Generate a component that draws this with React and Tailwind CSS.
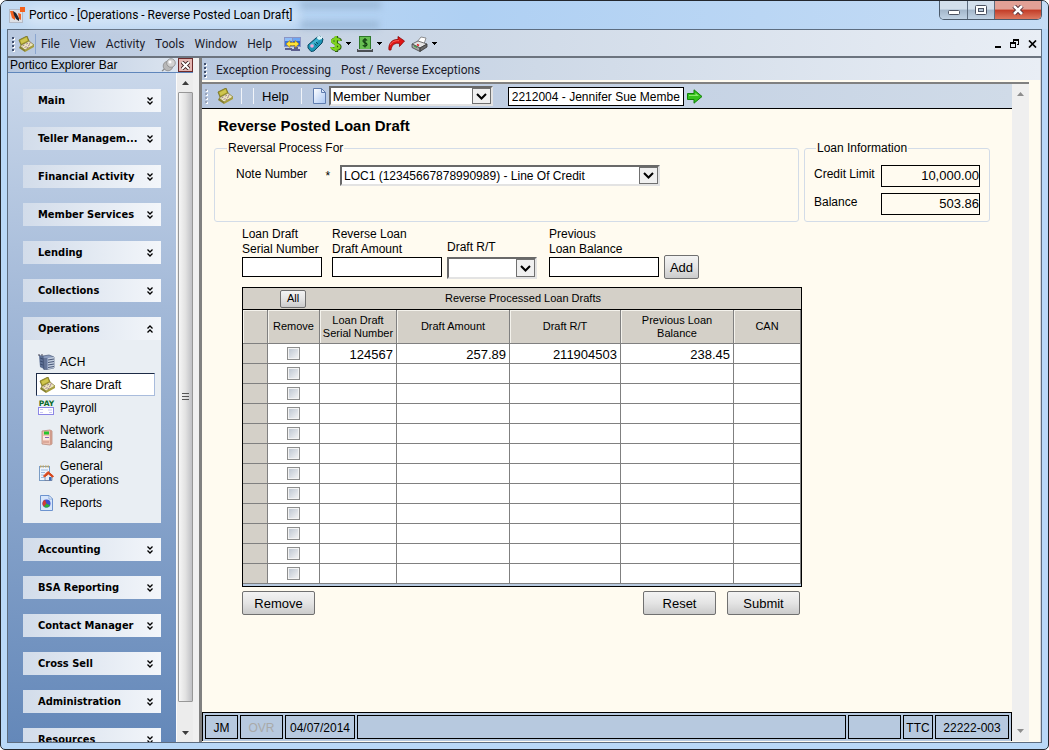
import React from "react";

const sans = "font-['Liberation_Sans',Arial,sans-serif]";
const ui = "font-['Roboto','Noto_Sans',sans-serif]";
const heading = "font-['DejaVu_Sans_Condensed','DejaVu_Sans',sans-serif]";

/* ---------- icons ---------- */

function LogoIcon() {
  return (
    <svg width="16" height="16" viewBox="0 0 16 16" aria-hidden="true">
      <rect x=".5" y="2.500" width="13" height="13" fill="#dde0e6" stroke="#b4bac6" />
      <path d="M1 4h3l2 3v6l-3-2z" fill="#f2611f" />
      <path d="M4 4l3 2 3 5v3l-3-2-2-4z" fill="#1c2531" />
      <path d="M9 6l3 1v6l-2-1z" fill="#f2611f" />
      <rect x="11" y="0" width="5" height="5" fill="#f4601a" />
    </svg>
  );
}

function DraftIcon({ size = 16 }) {
  return (
    <svg width={size} height={size} viewBox="0 0 16 16" aria-hidden="true">
      <path d="M1 4l8-4 2 5-8 4z" fill="#b5a92f" stroke="#6f6a20" strokeWidth=".8" />
      <path d="M2.500 4.500L8.500 1.500l1 3-6 3z" fill="#cfc650" />
      <path d="M2 10l9-5 5 4-9 5z" fill="#ece6bb" stroke="#8d8538" strokeWidth=".8" />
      <path d="M4.500 10l2-1M6.500 11.500l2-1M8 8.200l2-1M10 9.600l2-1M11 7.500l2-1M8.500 12l2-1" stroke="#a5829a" strokeWidth="1" />
      <path d="M2 10l5 4v2L1 12z" fill="#857f30" />
      <path d="M7 14l9-5v2l-9 5z" fill="#a79e3c" />
    </svg>
  );
}

function MonitorsIcon() {
  return (
    <svg width="17" height="16" viewBox="0 0 17 16" aria-hidden="true">
      <rect x=".5" y="1.500" width="8" height="9" fill="#3c74da" stroke="#8a94c4" />
      <path d="M1 2h7v3H1z" fill="#8fbdf7" />
      <rect x="8.500" y="1.500" width="8" height="9" fill="#2f62cf" stroke="#8a94c4" />
      <path d="M9 2h7v3H9z" fill="#6ea5f2" />
      <path d="M1 12h7v2H1zM7 13h9v2H7zM10 11h4v2h-4z" fill="#5b5f8e" />
      <path d="M2 8l4-3.500v2h5v-2L15 8l-4 3.500v-2H6v2z" fill="#ffe438" stroke="#a8820c" strokeWidth=".6" />
    </svg>
  );
}

function PhoneIcon() {
  return (
    <svg width="17" height="17" viewBox="0 0 17 17" aria-hidden="true">
      <path d="M1 10l8-7 4-2 3 3-1 4-8 8-3 .5L1 13z" fill="#1f95b5" stroke="#0c4a63" strokeWidth="1" />
      <path d="M2.500 10l7-6 2.500 1-7 7z" fill="#43b4d0" />
      <path d="M9.500 3L12 .5l1.500 1L15 1v3l-3 1z" fill="#d9f4fa" />
      <circle cx="5" cy="11" r="1.800" fill="#f2a6d4" />
      <path d="M9 7l2 2M7.500 8.500l2 2" stroke="#0c4a63" />
    </svg>
  );
}

function DollarIcon() {
  return (
    <svg width="12" height="16" viewBox="0 0 12 16" aria-hidden="true">
      <path d="M10.500 5C10 2.500 2.500 2 2.500 5S10 7.500 10 10.800 2 14 2 11M6.500 0v16" fill="none" stroke="#2d5d10" strokeWidth="3.200" />
      <path d="M9.800 5C9.500 2.500 2 2 2 5s7.500 2.500 7.500 5.500S1.500 13.500 1.500 11M5.800 0v15" fill="none" stroke="#7fd41f" strokeWidth="2.200" />
    </svg>
  );
}

function CashIcon() {
  return (
    <svg width="16" height="16" viewBox="0 0 16 16" aria-hidden="true">
      <rect x="2.500" y=".5" width="11" height="13" fill="#67bf52" stroke="#2f7a2b" />
      <path d="M10 4.500C9.500 3.300 6 3.200 6 5s4 1.500 4 3.500-3.800 2-4 .5M8 2v9.500" fill="none" stroke="#123f12" strokeWidth="1.200" />
      <path d="M0 13h16v3H0z" fill="#4b4f55" />
      <path d="M1 13h14v1H1z" fill="#b7bcc4" />
    </svg>
  );
}

function RedArrowIcon() {
  return (
    <svg width="17" height="15" viewBox="0 0 17 15" aria-hidden="true">
      <path d="M1 14C0 8 4 3 10 3.500V.5L16.500 5l-5 5.500V7.500C7 6.500 3.500 9 3 14z" fill="#e01515" stroke="#8c0808" strokeWidth=".8" />
      <path d="M2 9c2-3.500 5-4.500 9-4.300" fill="none" stroke="#ff7a70" strokeWidth=".8" />
    </svg>
  );
}

function PrinterIcon() {
  return (
    <svg width="17" height="16" viewBox="0 0 17 16" aria-hidden="true">
      <path d="M6 6l4-5 5 1-2 6z" fill="#fff" stroke="#777" strokeWidth=".8" />
      <path d="M1 8l6-3 9 3-7 4z" fill="#e4e4e4" stroke="#555" strokeWidth=".8" />
      <path d="M1 8l8 4v3.500l-8-4z" fill="#a4a4a4" stroke="#444" strokeWidth=".8" />
      <path d="M9 12l7-4v3l-7 4.500z" fill="#6a6a6a" stroke="#333" strokeWidth=".8" />
      <path d="M6 8.500l2 1" stroke="#d22" strokeWidth="1.500" />
      <path d="M3 10l3 1.500" stroke="#3a3" strokeWidth="1" />
    </svg>
  );
}

function PageIcon() {
  return (
    <svg width="13" height="16" viewBox="0 0 13 16" aria-hidden="true">
      <defs>
        <linearGradient id="page" x1="0" y1="0" x2="1" y2="1">
          <stop offset="0" stopColor="#fff" />
          <stop offset="1" stopColor="#a9c6f2" />
        </linearGradient>
      </defs>
      <path d="M.5.5h8l4 4v11H.5z" fill="url(#page)" stroke="#5f7cae" />
      <path d="M8.500.5v4h4z" fill="#dfeafb" stroke="#5f7cae" />
    </svg>
  );
}

function GreenArrowIcon() {
  return (
    <svg width="16" height="15" viewBox="0 0 16 15" aria-hidden="true">
      <path d="M.5 4.500H7V.8l8 6.700-8 6.700v-3.700H.5z" fill="#35c21c" stroke="#128008" />
      <path d="M2 6h6.500V4L12 7H2z" fill="#8be86c" />
    </svg>
  );
}

function Caret() {
  return (
    <svg width="5" height="3" viewBox="0 0 5 3" shapeRendering="crispEdges" aria-hidden="true">
      <path d="M0 0h5v1H4v1H3v1H2V2H1V1H0z" fill="#000" />
    </svg>
  );
}

function DoubleChevron({ up }) {
  return (
    <svg width="6" height="8" viewBox="0 0 6 8" className={up ? "rotate-180" : ""} aria-hidden="true">
      <path d="M.5 .5L3 3 5.500.5M.5 4.500L3 7l2.500-2.500" fill="none" stroke="#000" strokeWidth="1.300" />
    </svg>
  );
}

function PinIcon() {
  return (
    <svg width="15" height="14" viewBox="0 0 15 14" aria-hidden="true">
      <path d="M6 9l-5 4" stroke="#8a8a8a" strokeWidth="1.200" />
      <circle cx="7" cy="8" r="4.800" fill="#b8b8b8" stroke="#8b8b8b" strokeWidth=".8" />
      <circle cx="10" cy="5" r="4.300" fill="#d2d2d2" stroke="#8b8b8b" strokeWidth=".8" />
      <circle cx="9" cy="4" r="1.500" fill="#fff" />
    </svg>
  );
}

function AchIcon() {
  return (
    <svg width="17" height="16" viewBox="0 0 17 16" aria-hidden="true">
      <path d="M1 1l5 1v13l-4-2z" fill="#5c6f94" />
      <path d="M5 2l6-1 5 2v11l-5 1-5 1z" fill="#8a9bbd" stroke="#4b5a7a" strokeWidth=".7" />
      <path d="M10 4l6-1v11l-6 1z" fill="#c3cede" />
      <path d="M10 6l6-1M10 8.500l6-1M10 11l6-1M10 13.500l6-1M2 4l3 1M2 7l3 1M2 10l3 1M6 4v11M8 4v11" stroke="#39486b" strokeWidth=".9" />
      <path d="M0 1h6" stroke="#445" strokeDasharray="2 1" />
    </svg>
  );
}

function PayIcon() {
  return (
    <svg width="17" height="16" viewBox="0 0 17 16" aria-hidden="true">
      <text x="8.500" y="6" textAnchor="middle" fontSize="7.500" fontWeight="bold" fontFamily="DejaVu Sans, sans-serif" fill="#0c6a2c">PAY</text>
      <rect x=".5" y="7.500" width="15" height="7" fill="#fff" stroke="#8c86e6" />
      <path d="M2 9.500h3M10 10h4M2 12.500h3M11 12.500h3" stroke="#c9c6f6" />
    </svg>
  );
}

function NetworkIcon() {
  return (
    <svg width="12" height="17" viewBox="0 0 12 17" aria-hidden="true">
      <path d="M1 2l8-1 2 1v13l-2 1-8-1z" fill="#efc3b4" stroke="#b98a7c" strokeWidth=".8" />
      <path d="M9 1l2 1v13l-2 1z" fill="#cf9b8b" />
      <rect x="3" y="2.500" width="5" height="3" fill="#28c42c" />
      <rect x="2" y="7" width="6.500" height="4" fill="#fbe9e2" />
      <path d="M4 8.500h4" stroke="#8a62b5" />
      <path d="M2 13h6" stroke="#c98f80" />
    </svg>
  );
}

function GeneralIcon() {
  return (
    <svg width="15" height="17" viewBox="0 0 15 17" aria-hidden="true">
      <rect x=".5" y="1.500" width="10" height="14" fill="#eef5ff" stroke="#7a9cc4" />
      <path d="M1 1.500h9" stroke="#c0a868" strokeWidth="2" strokeDasharray="1.500 1" />
      <path d="M2 5h7M2 7.500h4M2 10h3M2 12.500h3" stroke="#9db9dd" />
      <path d="M6 11v4.500h7V11l-3.500-3z" fill="#e9edf5" stroke="#5e6f91" strokeWidth=".7" />
      <path d="M4.500 11L9 6.500l5.500 4.700-1 1L9.500 9l-4 3z" fill="#d9481c" stroke="#d9481c" />
      <rect x="10" y="12" width="2.500" height="3.500" fill="#3d6bb5" />
    </svg>
  );
}

function ReportsIcon() {
  return (
    <svg width="13" height="16" viewBox="0 0 13 16" aria-hidden="true">
      <path d="M.5.5h8.500l3.500 3.500v11.500H.5z" fill="#d7e6fb" stroke="#6c93cf" />
      <path d="M9 .5V4h3.500z" fill="#fff" stroke="#6c93cf" strokeWidth=".7" />
      <circle cx="6.500" cy="8.500" r="4" fill="#3b50cf" />
      <path d="M6.500 8.500l-1.500-3.700A4 4 0 0 0 4 11.700z" fill="#d13a35" />
      <path d="M6.500 8.500L4 11.700A4 4 0 0 0 10 10.400z" fill="#2fae3a" />
    </svg>
  );
}

function ScrollTriangle({ down, muted }) {
  return (
    <svg width="7" height="4" viewBox="0 0 7 4" className={down ? "rotate-180" : ""} aria-hidden="true">
      <path d="M0 4l3.500-4L7 4z" fill={muted ? "#8d8d8d" : "#3c3c3c"} />
    </svg>
  );
}

function Grip({ light }) {
  return (
    <svg width="3" height="16" viewBox="0 0 3 16" shapeRendering="crispEdges" aria-hidden="true">
      {[1, 5, 9, 13].map((y) => (
        <g key={y}>
          <rect x="1" y={y + 1} width="2" height="2" fill="#fff" />
          <rect x="0" y={y} width="2" height="2" fill={light ? "#9aa3b6" : "#41506f"} />
        </g>
      ))}
    </svg>
  );
}

/* ---------- shared controls ---------- */

function GrayButton({ children, className = "" }) {
  return (
    <button
      type="button"
      className={`flex items-center justify-center rounded-[2px] border border-[#707070] bg-linear-to-b from-[#f3f3f3] via-[#e4e4e4] to-[#cbcbcb] ${className}`}
    >
      {children}
    </button>
  );
}

function Combo({ id, label, options, className = "" }) {
  return (
    <div className={`relative ${className}`}>
      <select
        id={id}
        aria-label={label}
        className="h-full w-full appearance-none border-2 border-t-[#696969] border-r-[#e3e3e3] border-b-[#e3e3e3] border-l-[#696969] bg-white pt-px pr-5 pl-[2px] leading-4 text-black outline-none"
      >
        {options.map((o) => (
          <option key={o}>{o}</option>
        ))}
      </select>
      <span className="pointer-events-none absolute inset-y-[2px] right-[2px] flex w-[19px] items-center justify-center border border-[#707070] bg-[#f0f0f0]">
        <svg width="11" height="7" viewBox="0 0 11 7" aria-hidden="true">
          <path d="M1 1l4.500 4.500L10 1" fill="none" stroke="#000" strokeWidth="2" />
        </svg>
      </span>
    </div>
  );
}

/* ---------- window frame ---------- */

function TitleBar() {
  return (
    <header className="relative flex h-7 shrink-0 items-center bg-linear-to-r from-[#c3daf2] via-[#afd0f3] via-45% to-[#c5dcf5] pl-2">
      <span className="absolute top-0 left-[300px] h-2 w-[80px] bg-[#8fabc9]/60 blur-[3px]" />
      <span className="absolute top-5 left-[300px] h-2 w-[78px] bg-[#8fabc9]/60 blur-[3px]" />
      <span className="absolute top-[5px] left-6 h-5 w-[275px] rounded-full bg-white/30 blur-[5px]" />
      <span className="relative">
        <LogoIcon />
      </span>
      <h1 className={`relative ml-1 text-[12px] leading-4 text-black ${ui}`}>
        Portico - [Operations - Reverse Posted Loan Draft]
      </h1>
      <div className="absolute top-0 right-[6px] flex h-[19px] overflow-hidden rounded-b-[5px] border border-t-0 border-[#4b5a6b]">
        <button type="button" aria-label="Minimize" className="flex w-7 items-center justify-center border-r border-[#5d6c7e] bg-linear-to-b from-[#d3dfec] from-45% via-[#a3b6ca] via-50% to-[#c0d2e4]">
          <svg width="12" height="5" viewBox="0 0 12 5" className="mt-1" aria-hidden="true">
            <rect x=".5" y=".5" width="11" height="4" rx="1" fill="#fff" stroke="#4b5262" />
          </svg>
        </button>
        <button type="button" aria-label="Maximize" className="flex w-[27px] items-center justify-center border-r border-[#5d6c7e] bg-linear-to-b from-[#d3dfec] from-45% via-[#a3b6ca] via-50% to-[#c0d2e4]">
          <svg width="12" height="10" viewBox="0 0 12 10" aria-hidden="true">
            <rect x=".5" y=".5" width="11" height="9" rx="1" fill="#fff" stroke="#4b5262" />
            <rect x="3.500" y="3.500" width="5" height="3" fill="#b5c5d6" stroke="#4b5262" />
          </svg>
        </button>
        <button type="button" aria-label="Close" className="flex w-[46px] items-center justify-center bg-linear-to-b from-[#e2a196] from-45% via-[#c23b26] via-50% to-[#dd7860]">
          <svg width="12" height="10" viewBox="0 0 12 10" aria-hidden="true">
            <path d="M2 1l8 8M10 1L2 9" stroke="#57323a" strokeWidth="4.500" />
            <path d="M2 1l8 8M10 1L2 9" stroke="#fff" strokeWidth="2.600" />
          </svg>
        </button>
      </div>
    </header>
  );
}

function IconButton({ label, caret, children }) {
  return (
    <button type="button" aria-label={label} className="flex items-center gap-1">
      {children}
      {caret && <Caret />}
    </button>
  );
}

function MenuBar() {
  return (
    <div className="flex h-7 shrink-0 items-center border-b-2 border-[#6c747f] bg-linear-to-r from-[#b9c9e0] via-[#ced9e7] via-45% to-[#e9eef5] pt-px pl-1">
      <Grip />
      <span className="ml-[3px] flex h-5 items-center border-r border-[#8ba6d0] pr-px">
        <DraftIcon />
      </span>
      <nav className={`ml-[5px] flex items-center gap-[10px] text-[12px] leading-4 text-[#1c1c2b] ${ui}`}>
        {["File", "View", "Activity", "Tools", "Window", "Help"].map((m) => (
          <button type="button" key={m}>
            {m}
          </button>
        ))}
      </nav>
      <div className="ml-3 flex items-center gap-[6px]">
        <IconButton label="Connections"><MonitorsIcon /></IconButton>
        <IconButton label="Phone"><PhoneIcon /></IconButton>
        <IconButton label="Teller" caret><DollarIcon /></IconButton>
        <IconButton label="Cash" caret><CashIcon /></IconButton>
        <IconButton label="Go"><RedArrowIcon /></IconButton>
        <IconButton label="Print" caret><PrinterIcon /></IconButton>
      </div>
      <div className="mr-1 ml-auto flex items-center gap-[9px]">
        <button type="button" aria-label="Minimize document">
          <svg width="7" height="9" viewBox="0 0 7 9" aria-hidden="true"><path d="M1 7h6v2H1z" /></svg>
        </button>
        <button type="button" aria-label="Restore document">
          <svg width="9" height="9" viewBox="0 0 9 9" shapeRendering="crispEdges" aria-hidden="true">
            <path d="M3 0h6v6H7V5h1V2H4v1H3zM0 3h6v6H0zM1 5v3h4V5z" fillRule="evenodd" />
          </svg>
        </button>
        <button type="button" aria-label="Close document">
          <svg width="9" height="8" viewBox="0 0 9 8" aria-hidden="true"><path d="M1 .5l7 7M8 .5l-7 7" stroke="#000" strokeWidth="1.700" /></svg>
        </button>
      </div>
    </div>
  );
}

/* ---------- sidebar ---------- */

const operations = [
  { label: "ACH", icon: AchIcon },
  { label: "Share Draft", icon: DraftIcon, active: true },
  { label: "Payroll", icon: PayIcon },
  { label: "Network Balancing", icon: NetworkIcon, tall: true },
  { label: "General Operations", icon: GeneralIcon, tall: true },
  { label: "Reports", icon: ReportsIcon },
];

const groups = [
  "Main", "Teller Managem...", "Financial Activity", "Member Services", "Lending", "Collections",
  "Operations", "Accounting", "BSA Reporting", "Contact Manager", "Cross Sell", "Administration", "Resources",
];

function Group({ name }) {
  const open = name === "Operations";
  return (
    <section className="shrink-0">
      <button
        type="button"
        aria-expanded={open}
        className={`flex h-[23px] w-full items-center justify-between bg-linear-to-r from-[#d2dcea] to-[#f3f6fa] pr-2 pl-[15px] text-[11px] leading-4 font-bold text-black ${heading}`}
      >
        {name}
        <DoubleChevron up={open} />
      </button>
      {open && (
        <ul className="bg-[#e9eef3] pt-[10px] pr-[6px] pb-[9px] pl-[13px] text-[12px] leading-[14px]">
          {operations.map(({ label, icon: Icon, active, tall }) => (
            <li key={label} className={tall ? "h-9" : "h-[23px]"}>
              <a
                href="#"
                className={`flex h-full items-center gap-[5px] border pl-px ${
                  active ? "border-t-[#1c2a45] border-r-[#a9bcdc] border-b-[#a9bcdc] border-l-[#1c2a45] bg-white" : "border-transparent"
                }`}
              >
                <span className="flex w-[17px] shrink-0 justify-center">
                  <Icon />
                </span>
                <span className={tall ? "w-16" : ""}>{label}</span>
              </a>
            </li>
          ))}
        </ul>
      )}
    </section>
  );
}

function Sidebar() {
  return (
    <aside className={`flex w-[191px] shrink-0 flex-col bg-[#f0f0f0] text-black ${sans}`}>
      <div className="mr-[6px] flex h-[15px] shrink-0 items-center border-b border-[#5f86bb] bg-linear-to-r from-[#b5c6de] to-[#dfe7f1] pl-[2px] text-[12px] leading-[14px]">
        <h2>Portico Explorer Bar</h2>
        <button type="button" aria-label="Pin" className="ml-auto">
          <PinIcon />
        </button>
        <button type="button" aria-label="Close bar" className="ml-[2px] flex h-[14px] w-[15px] items-center justify-center border border-[#6d2b2b] bg-[#e4b6b2]">
          <svg width="9" height="9" viewBox="0 0 9 9" aria-hidden="true">
            <path d="M1 1l7 7M8 1L1 8" stroke="#3d2222" strokeWidth="3.800" />
            <path d="M1 1l7 7M8 1L1 8" stroke="#fff" strokeWidth="2" />
          </svg>
        </button>
      </div>
      <div className="flex min-h-0 flex-1">
        <div className="flex min-h-0 flex-1 flex-col gap-[15px] overflow-hidden bg-linear-to-b from-[#c9d7ea] via-[#a3b9d8] via-35% to-[#6488b9] px-[15px] pt-4">
          {groups.map((g) => (
            <Group key={g} name={g} />
          ))}
        </div>
        <div className="mr-[6px] flex w-[17px] shrink-0 flex-col items-center border-l border-[#fbfbfb] bg-[#ececec]">
          <div className="flex h-[19px] items-center"><ScrollTriangle /></div>
          <div className="flex w-[15px] flex-1 items-center justify-center rounded-[1px] border border-[#979797] bg-linear-to-r from-[#f6f6f6] via-[#e2e2e2] to-[#bfc0c4]">
            <svg width="7" height="8" viewBox="0 0 7 8" shapeRendering="crispEdges" aria-hidden="true">
              <path d="M0 0h7v1H0zM0 3h7v1H0zM0 6h7v1H0z" fill="#555" />
            </svg>
          </div>
          <div className="flex h-10 items-end pb-[7px]"><ScrollTriangle down /></div>
        </div>
      </div>
    </aside>
  );
}

/* ---------- main form ---------- */

function Toolbar() {
  return (
    <div className="flex h-[25px] shrink-0 items-center border-b border-black bg-linear-to-r from-[#b7c7df] to-[#d0dbe8] pl-[3px] text-[13px]">
      <Grip light />
      <span className="ml-[9px]"><DraftIcon /></span>
      <span className="ml-2 h-4 w-px bg-white/80" />
      <span className="ml-[11px] h-4 w-px bg-white/80" />
      <button type="button" className="ml-2 pt-px">Help</button>
      <span className="ml-3 h-4 w-px bg-white/80" />
      <button type="button" aria-label="New" className="ml-[11px]"><PageIcon /></button>
      <Combo id="search-by" label="Search by" options={["Member Number"]} className="ml-[3px] h-5 w-[164px]" />
      <input
        type="text"
        aria-label="Member"
        defaultValue="2212004 - Jennifer Sue Member"
        className="ml-[15px] h-[19px] w-[176px] border border-black bg-white px-[3px] pt-px text-[12px] outline-none"
      />
      <button type="button" aria-label="Search" className="ml-[3px]"><GreenArrowIcon /></button>
    </div>
  );
}

function GroupBox({ legend, legendClass = "", className = "", children }) {
  return (
    <fieldset className={`h-[82px] min-w-0 rounded-[3px] border border-[#d3dce8] ${className}`}>
      <legend className={`px-px leading-4 ${legendClass}`}>{legend}</legend>
      {children}
    </fieldset>
  );
}

function LabeledInput({ id, label, className }) {
  return (
    <div className={`flex flex-col ${className}`}>
      <label htmlFor={id} className="leading-[15px] whitespace-pre">{label}</label>
      <input id={id} type="text" className="h-5 w-full border border-black bg-white px-1 outline-none" />
    </div>
  );
}

function AmountField({ id, label, value }) {
  return (
    <div className="flex justify-between">
      <label htmlFor={id} className="leading-[18px]">{label}</label>
      <input
        id={id}
        readOnly
        defaultValue={value}
        className="h-[22px] w-[99px] border border-black bg-transparent pb-[2px] text-right text-[13px] outline-none"
      />
    </div>
  );
}

const rows = [["124567", "257.89", "211904503", "238.45", ""], ...Array.from({ length: 11 }, () => ["", "", "", "", ""])];
const th = "border-r border-b border-[#808080] px-px font-normal shadow-[inset_1px_1px_0_#f4f2ec]";

function DraftTable() {
  return (
    <div className="w-[560px] border border-black bg-[#b7c9df] pb-[2px]">
      <div className="flex h-[22px] items-center border-b border-black bg-[#d4d0c8] text-[11px]">
        <GrayButton className="ml-[37px] h-[18px] w-[26px]">All</GrayButton>
        <h3 id="drafts" className="flex-1 pr-[61px] text-center">
          Reverse Processed Loan Drafts
        </h3>
      </div>
      <table aria-labelledby="drafts" className="w-full table-fixed border-separate border-spacing-0">
        <colgroup>
          <col className="w-[25px]" />
          <col className="w-[52px]" />
          <col className="w-[77px]" />
          <col className="w-[113px]" />
          <col className="w-[111px]" />
          <col className="w-[113px]" />
          <col />
        </colgroup>
        <thead>
          <tr className="h-[34px] bg-[#d4d0c8] text-[11px] leading-[13px]">
            <td className={th} />
            <th className={th}>Remove</th>
            <th className={`${th} whitespace-pre-line`}>{"Loan Draft\nSerial Number"}</th>
            <th className={th}>Draft Amount</th>
            <th className={th}>Draft R/T</th>
            <th className={`${th} whitespace-pre-line`}>{"Previous Loan\nBalance"}</th>
            <th className={th}>CAN</th>
          </tr>
        </thead>
        <tbody>
          {rows.map((cells, i) => (
            <tr key={i} className="h-5 bg-white text-[13px] leading-4">
              <td className="border-r border-b border-[#808080] bg-[#d4d0c8]" />
              <td className="border-r border-b border-[#808080] p-0">
                <input
                  type="checkbox"
                  aria-label={`Remove row ${i + 1}`}
                  className="mx-auto block size-[13px] appearance-none border border-[#8e8f8f] bg-linear-to-br from-[#b9c2ce] to-[#f8f8f8] shadow-[inset_0_0_0_1px_#f4f4f4]"
                />
              </td>
              {cells.map((c, j) => (
                <td key={j} className="border-r border-b border-[#808080] py-0 pr-[3px] pl-0 text-right">
                  <span className="block pt-[3px]">{c}</span>
                </td>
              ))}
            </tr>
          ))}
        </tbody>
      </table>
    </div>
  );
}

function Form() {
  return (
    <main className="min-h-0 flex-1 overflow-hidden pt-2 pl-3 text-[12px]">
      <h2 className="pl-1 text-[15px] leading-[18px] font-bold">Reverse Posted Loan Draft</h2>
      <div className="mt-[5px] flex gap-[5px]">
        <GroupBox legend="Reversal Process For" legendClass="ml-3" className="w-[585px]">
          <div className="flex pt-[9px] pl-[21px]">
            <label htmlFor="note-number" className="leading-[18px]">Note Number</label>
            <span className="ml-[18px] pt-px leading-5">*</span>
            <Combo
              id="note-number"
              options={["LOC1 (12345667878990989) - Line Of Credit"]}
              className="mr-[138px] ml-auto h-[21px] w-80"
            />
          </div>
        </GroupBox>
        <GroupBox legend="Loan Information" legendClass="ml-[11px]" className="w-[186px]">
          <div className="flex flex-col gap-[6px] px-[9px] pt-[9px]">
            <AmountField id="credit-limit" label="Credit Limit" value="10,000.00" />
            <AmountField id="balance" label="Balance" value="503.86" />
          </div>
        </GroupBox>
      </div>

      <div className="mt-[5px] ml-7 flex items-start">
        <LabeledInput id="serial" label={"Loan Draft\nSerial Number"} className="w-20" />
        <LabeledInput id="amount" label={"Reverse Loan\nDraft Amount"} className="ml-[10px] w-[110px]" />
        <div className="ml-[5px] flex w-[90px] flex-col gap-[2px] pt-[13px]">
          <label htmlFor="draft-rt" className="leading-[15px]">Draft R/T</label>
          <Combo id="draft-rt" options={[""]} className="h-[22px]" />
        </div>
        <LabeledInput id="previous" label={"Previous\nLoan Balance"} className="ml-3 w-[110px]" />
        <GrayButton className="mt-7 ml-[5px] h-6 w-[35px] pt-px text-[13px]">Add</GrayButton>
      </div>

      <div className="mt-2 ml-7 w-[560px]">
        <DraftTable />
        <div className="mt-1 flex gap-[11px] pr-[2px] text-[13px]">
          <GrayButton className="mr-auto h-6 w-[73px] pt-px">Remove</GrayButton>
          <GrayButton className="h-6 w-[73px] pt-px">Reset</GrayButton>
          <GrayButton className="h-6 w-[73px] pt-px">Submit</GrayButton>
        </div>
      </div>
    </main>
  );
}

function StatusBar() {
  const cell = "flex items-center justify-center border border-black pt-px";
  return (
    <footer className="flex h-[29px] shrink-0 gap-[2px] border-t border-r border-l border-black bg-[#b7c9df] px-[2px] py-[2px] text-[12px]">
      <div className={`w-[33px] ${cell}`}>JM</div>
      <div className={`w-[43px] text-[#a9a9a9] ${cell}`}>OVR</div>
      <div className={`w-[70px] ${cell}`}>04/07/2014</div>
      <div className={`flex-1 ${cell}`} />
      <div className={`w-[53px] ${cell}`} />
      <div className={`w-[30px] ${cell}`}>TTC</div>
      <div className={`w-[74px] ${cell}`}>22222-003</div>
    </footer>
  );
}

export default function App() {
  return (
    <div className={`flex h-screen flex-col overflow-hidden rounded-t-[7px] rounded-b-[5px] border border-[#23272e] bg-[#b9d8f7] text-black ${sans}`}>
      <TitleBar />
      <div className="mx-[6px] mb-[6px] flex min-h-0 flex-1 flex-col border border-[#5d6d80]">
        <MenuBar />
        <div className="flex min-h-0 flex-1">
          <Sidebar />
          <div className="flex min-w-0 flex-1 flex-col border-r border-l-[3px] border-r-[#d8d8d8] border-l-[#808080] bg-[#fffbf0] pb-px">
            <div className="flex h-[22px] shrink-0 items-center gap-[9px] bg-linear-to-r from-[#b9c9e0] via-[#ced9e7] via-40% to-[#e9eef5] pt-[2px] pl-[2px]">
              <Grip />
              <nav className={`flex gap-[10px] text-[12px] leading-4 text-[#1c1c2b] ${ui}`}>
                <button type="button">Exception Processing</button>
                <button type="button">Post / Reverse Exceptions</button>
              </nav>
            </div>
            <div className="mt-[2px] mr-[11px] flex min-h-0 flex-1 border-t-2 border-[#808080]">
              <div className="flex min-w-0 flex-1 flex-col">
                <Toolbar />
                <Form />
                <StatusBar />
              </div>
              <div className="flex w-[17px] shrink-0 flex-col items-center justify-between bg-[#efefef] py-2">
                <ScrollTriangle muted />
                <ScrollTriangle down muted />
              </div>
            </div>
          </div>
        </div>
      </div>
    </div>
  );
}
